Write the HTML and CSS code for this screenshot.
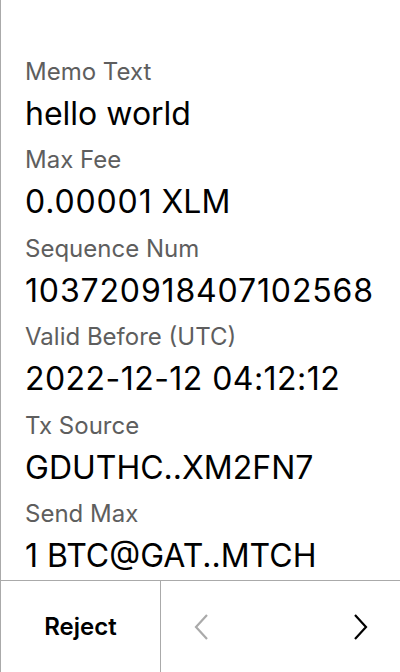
FILE: index.html
```html
<!DOCTYPE html>
<html>
<head>
<meta charset="utf-8">
<link rel="stylesheet" href="styles.css">
</head>
<body>
<div class="screen">
  <div class="content">
    <div class="item"><div class="label">Memo Text</div><div class="value">hello world</div></div>
    <div class="item"><div class="label">Max Fee</div><div class="value"><span class="num">0.00001</span> XLM</div></div>
    <div class="item"><div class="label">Sequence Num</div><div class="value num">103720918407102568</div></div>
    <div class="item"><div class="label">Valid Before (UTC)</div><div class="value date">2022-12-12 04:12:12</div></div>
    <div class="item"><div class="label">Tx Source</div><div class="value">GDUTHC..XM2FN7</div></div>
    <div class="item"><div class="label">Send Max</div><div class="value">1 BTC@GAT..MTCH</div></div>
  </div>
  <div class="footer">
    <div class="reject">Reject</div>
    <div class="nav">
      <svg class="chev prev" width="16" height="26" viewBox="0 0 16 26"><path d="M14 1 L3 13 L14 25" fill="none" stroke="currentColor" stroke-width="2.2"/></svg>
      <svg class="chev next" width="16" height="26" viewBox="0 0 16 26"><path d="M2 1 L13 13 L2 25" fill="none" stroke="currentColor" stroke-width="2.2"/></svg>
    </div>
  </div>
</div>
</body>
</html>
```
FILE: styles.css
```css
html, body {
  margin: 0;
  padding: 0;
  background: #fff;
}
body {
  font-family: Inter, "Noto Sans", sans-serif;
  color: #000;
}
.screen {
  width: 400px;
  height: 672px;
  box-sizing: border-box;
  border-left: 1px solid #aaaaaa;
  display: flex;
  flex-direction: column;
}
.content {
  height: 580px;
  box-sizing: border-box;
  padding: 56px 0 0 24px;
  display: flex;
  flex-direction: column;
}
.item {
  height: 88.4px;
  flex-shrink: 0;
  display: flex;
  flex-direction: column;
}
.label {
  font-size: 24px;
  line-height: 32px;
  color: #5e5e5e;
}
.value {
  margin-top: 6px;
  font-size: 32px;
  line-height: 40px;
  color: #000;
  white-space: nowrap;
}
.num {
  letter-spacing: 0.85px;
}
.date {
  letter-spacing: 0.45px;
}
.footer {
  flex: 1;
  display: flex;
  border-top: 1px solid #aaaaaa;
}
.reject {
  width: 159px;
  border-right: 1px solid #aaaaaa;
  display: flex;
  align-items: center;
  justify-content: center;
  font-size: 24px;
  font-weight: 600;
}
.nav {
  flex: 1;
  display: flex;
  align-items: center;
  justify-content: space-between;
  padding: 0 31px 0 32px;
}
.chev {
  display: block;
}
.prev {
  color: #aaaaaa;
}
.next {
  color: #000;
}
```
